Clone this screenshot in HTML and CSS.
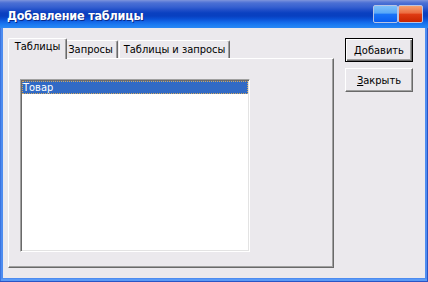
FILE: index.html
```html
<!DOCTYPE html>
<html lang="ru">
<head>
<meta charset="utf-8">
<title>Добавление таблицы</title>
<link rel="stylesheet" href="styles.css">
</head>
<body>
<div class="window">
  <div class="titlebar">
    <span class="title">Добавление таблицы</span>
    <div class="ctrls">
      <span class="cbtn cmin"></span>
      <span class="cbtn cclose"></span>
    </div>
  </div>
  <div class="frame">
    <div class="client">
      <div class="tabctl">
        <div class="tabs">
          <div class="tab sel t1">Таблицы</div>
          <div class="tab t2">Запросы</div>
          <div class="tab t3">Таблицы и запросы</div>
        </div>
        <div class="pane">
          <div class="listbox">
            <div class="item">Товар</div>
          </div>
        </div>
      </div>
      <div class="buttons">
        <div class="btn def"><u>Д</u>обавить</div>
        <div class="btn"><u>З</u>акрыть</div>
      </div>
    </div>
  </div>
</div>
</body>
</html>
```

FILE: styles.css
```css
html, body {
  margin: 0;
  padding: 0;
  background: #ebe9ed;
}
body {
  font-family: "DejaVu Sans Condensed", "Liberation Sans", sans-serif;
  font-size: 11px;
  color: #000;
}
.window {
  width: 428px;
  height: 282px;
  display: flex;
  flex-direction: column;
}
.titlebar {
  height: 28px;
  flex: none;
  display: flex;
  align-items: flex-start;
  padding: 0 5px 0 7px;
  box-sizing: border-box;
  background: linear-gradient(to bottom,
    #8096dc 0px, #6a86da 1px, #4a6fd4 3px, #3660d0 7px, #1f4ec8 10px,
    #0a40c0 13px, #0840c0 16px, #0a50d4 19px, #1468e8 22px, #1c7cf2 25px, #2a88f4 28px);
}
.title {
  color: #fff;
  font-weight: bold;
  font-size: 12.5px;
  line-height: 14px;
  margin-top: 9px;
  text-shadow: 1px 1px #0a2a8a;
  letter-spacing: -0.2px;
}
.ctrls {
  margin-left: auto;
  margin-top: 5px;
  display: flex;
}
.cbtn {
  width: 25px;
  height: 18px;
  box-sizing: border-box;
  border: 1px solid #b8c4e4;
  border-radius: 2px;
}
.cmin {
  background: linear-gradient(to bottom, #7ec0fa 0, #58a8f8 45%, #1a74f8 50%, #0a5ef0 100%);
}
.cclose {
  background: linear-gradient(to bottom, #f4a070 0, #ec6a40 45%, #e03c14 50%, #c82400 100%);
}
.frame {
  flex: 1;
  display: flex;
  padding: 0 3px 4px 3px;
  background: #4d8cf0;
  box-shadow: inset 0 -1px #2a54c4, inset 1px 0 #3c74e0, inset -1px 0 #2a54c4, inset 0 -3px #5a9af6;
}
.client {
  flex: 1;
  display: flex;
  align-items: flex-start;
  padding: 10px 0 0 5px;
  background: #ebe9ed;
}
.tabctl {
  width: 326px;
  display: flex;
  flex-direction: column;
}
.tabs {
  display: flex;
  align-items: flex-end;
  height: 20px;
  padding-left: 2px;
  position: relative;
  z-index: 1;
}
.tab {
  box-sizing: border-box;
  height: 18px;
  line-height: 17px;
  text-align: center;
  border-top: 1px solid #fff;
  border-left: 1px solid #fff;
  border-right: 1px solid #696969;
  box-shadow: inset -1px 0 #a0a0a0;
  border-radius: 2px 2px 0 0;
  background: #ebe9ed;
  white-space: nowrap;
}
.t1 { width: 59px; }
.t2 { width: 55px; margin-left: -2px; }
.t3 { width: 111px; margin-left: 1px; }
.tab.sel {
  height: 21px;
  margin: 0 -2px -1px -2px;
  line-height: 16px;
  position: relative;
  z-index: 2;
}
.pane {
  height: 210px;
  box-sizing: border-box;
  border-top: 1px solid #fff;
  border-left: 1px solid #fff;
  border-right: 1px solid #696969;
  border-bottom: 1px solid #696969;
  box-shadow: inset -1px -1px #a0a0a0;
  padding: 20px 0 0 11px;
}
.listbox {
  width: 230px;
  height: 173px;
  box-sizing: border-box;
  background: #fff;
  border: 1px solid;
  border-color: #a0a0a0 #fff #fff #a0a0a0;
  box-shadow: inset 1px 1px #696969, inset -1px -1px #e3e3e3;
  padding: 1px;
}
.item {
  height: 13px;
  box-sizing: border-box;
  background: #316ac5;
  color: #fff;
  border: 1px dotted #d0a860;
  line-height: 11px;
  padding-left: 0;
}
.buttons {
  margin-left: 11px;
  display: flex;
  flex-direction: column;
  gap: 6px;
}
.btn {
  width: 68px;
  height: 24px;
  box-sizing: border-box;
  display: flex;
  align-items: center;
  justify-content: center;
  border: 1px solid;
  border-color: #fff #696969 #696969 #fff;
  box-shadow: inset -1px -1px #a0a0a0;
  background: #ebe9ed;
}
.btn.def {
  border-color: #000;
  box-shadow: inset 1px 1px #fff, inset -1px -1px #696969, inset -2px -2px #a0a0a0;
}
.btn u {
  text-decoration: underline;
  text-underline-offset: 1px;
}
```
